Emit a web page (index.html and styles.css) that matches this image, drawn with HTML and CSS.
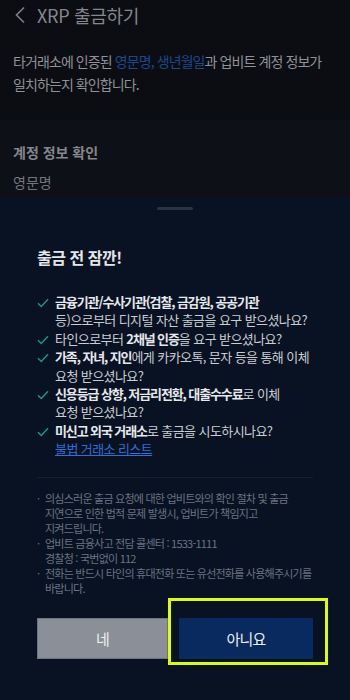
FILE: index.html
```html
<!DOCTYPE html>
<html lang="ko">
<head>
<meta charset="utf-8">
<link rel="stylesheet" href="styles.css">
</head>
<body>
<div class="page">
  <header class="topbar">
    <svg class="back" width="12" height="18" viewBox="0 0 12 18"><path d="M10 1.5 L2.5 9 L10 16.5" fill="none" stroke="#7d8087" stroke-width="1.6"/></svg>
    <h1 class="title">XRP 출금하기</h1>
  </header>
  <p class="desc">타거래소에 인증된 <span class="hl">영문명, 생년월일</span>과 업비트 계정 정보가<br>일치하는지 확인합니다.</p>
  <section class="account">
    <h2 class="acc-title">계정 정보 확인</h2>
    <p class="acc-label">영문명</p>
  </section>

  <div class="sheet">
    <div class="handle"></div>
    <h3 class="sheet-title">출금 전 잠깐!</h3>
    <ul class="checks">
      <li><svg class="chk" width="12" height="10" viewBox="0 0 12 10"><path d="M1 5.2 L4.3 8.5 L11 1.2" fill="none" stroke="#1f9a78" stroke-width="1.4"/></svg><span><b>금융기관/수사기관(검찰, 금감원, 공공기관</b><br>등)으로부터 디지털 자산 출금을 요구 받으셨나요?</span></li>
      <li><svg class="chk" width="12" height="10" viewBox="0 0 12 10"><path d="M1 5.2 L4.3 8.5 L11 1.2" fill="none" stroke="#1f9a78" stroke-width="1.4"/></svg><span>타인으로부터 <b>2채널 인증</b>을 요구 받으셨나요?</span></li>
      <li><svg class="chk" width="12" height="10" viewBox="0 0 12 10"><path d="M1 5.2 L4.3 8.5 L11 1.2" fill="none" stroke="#1f9a78" stroke-width="1.4"/></svg><span><b>가족, 자녀, 지인</b>에게 카카오톡, 문자 등을 통해 이체<br>요청 받으셨나요?</span></li>
      <li><svg class="chk" width="12" height="10" viewBox="0 0 12 10"><path d="M1 5.2 L4.3 8.5 L11 1.2" fill="none" stroke="#1f9a78" stroke-width="1.4"/></svg><span><b>신용등급 상향, 저금리전환, 대출수수료</b>로 이체<br>요청 받으셨나요?</span></li>
      <li><svg class="chk" width="12" height="10" viewBox="0 0 12 10"><path d="M1 5.2 L4.3 8.5 L11 1.2" fill="none" stroke="#1f9a78" stroke-width="1.4"/></svg><span><b>미신고 외국 거래소</b>로 출금을 시도하시나요?<br><a class="link" href="#">불법 거래소 리스트</a></span></li>
    </ul>
    <hr class="divider">
    <ul class="notes">
      <li>의심스러운 출금 요청에 대한 업비트와의 확인 절차 및 출금<br>지연으로 인한 법적 문제 발생시, 업비트가 책임지고<br>지켜드립니다.</li>
      <li>업비트 금융사고 전담 콜센터 : 1533-1111<br>경찰청 : 국번없이 112</li>
      <li>전화는 반드시 타인의 휴대전화 또는 유선전화를 사용해주시기를<br>바랍니다.</li>
    </ul>
    <div class="actions">
      <button class="btn btn-yes">네</button>
      <div class="focus-wrap">
        <button class="btn btn-no">아니요</button>
      </div>
    </div>
  </div>
</div>
</body>
</html>
```

FILE: styles.css
```css
* { box-sizing: border-box; }
html, body { margin: 0; padding: 0; }
body {
  background: #0b0d13;
  font-family: "Noto Sans CJK KR", "Noto Sans", "Liberation Sans", sans-serif;
  width: 350px;
  height: 700px;
  overflow: hidden;
}
.page {
  position: relative;
  width: 350px;
  height: 700px;
}
.topbar {
  display: flex;
  align-items: center;
  height: 30px;
  padding-left: 14px;
  gap: 11px;
}
.back { display: block; }
.title {
  margin: 0;
  font-size: 18px;
  font-weight: 400;
  color: #84878d;
  letter-spacing: -0.3px;
}
.desc {
  margin: 20px 0 0;
  padding: 0 13px;
  font-size: 14px;
  line-height: 23px;
  color: #8e9196;
  letter-spacing: -0.065em;
  white-space: nowrap;
}
.hl { color: #1b4a8c; }
.account {
  margin-top: 24px;
  background: #0d1017;
  padding: 22px 13px 0;
  height: 110px;
}
.acc-title {
  margin: 0;
  font-size: 14px;
  font-weight: 700;
  color: #84878d;
  line-height: 20px;
}
.acc-label {
  margin: 10px 0 0;
  font-size: 14px;
  color: #74777d;
  line-height: 20px;
}
.sheet {
  position: absolute;
  left: 0;
  right: 0;
  top: 198px;
  bottom: 0;
  background: #081222;
  padding: 0 37px;
}
.handle {
  width: 36px;
  height: 3px;
  border-radius: 2px;
  background: #2a3342;
  margin: 9px auto 0;
}
.sheet-title {
  margin: 36px 0 0;
  font-size: 16px;
  font-weight: 700;
  color: #e4e6e9;
  line-height: 22px;
  letter-spacing: -0.03em;
}
.checks {
  list-style: none;
  margin: 25px 0 0;
  padding: 0;
  font-size: 13px;
  line-height: 18.4px;
  color: #c9ccd1;
  letter-spacing: -0.045em;
  white-space: nowrap;
}
.checks li {
  display: flex;
  gap: 6px;
}
.checks b { color: #e6e8eb; font-weight: 700; letter-spacing: -0.085em; }
.chk { flex: none; margin-top: 5px; }
.link { color: #2f6fd6; text-decoration: underline; }
.divider {
  border: 0;
  border-top: 1px solid #17202e;
  margin: 18px 0 0;
}
.notes {
  list-style: none;
  margin: 13px 0 0;
  padding: 0;
  font-size: 11px;
  line-height: 15px;
  color: #6c7382;
  letter-spacing: -0.07em;
  white-space: nowrap;
}
.notes li {
  position: relative;
  padding-left: 8px;
}
.notes li::before {
  content: "·";
  position: absolute;
  left: 0;
  top: 0;
}
.actions {
  display: grid;
  grid-template-columns: 131px 1fr;
  gap: 11px;
  margin-top: 22px;
}
.btn {
  border: 0;
  height: 41px;
  font-family: inherit;
  font-size: 15px;
  color: #eef0f3;
  width: 100%;
  letter-spacing: -0.05em;
}
.btn-yes { background: #8a8f98; border: 1px solid #6f7580; }
.btn-no { background: #082a5e; }
.focus-wrap {
  position: relative;
  display: flex;
}
.focus-wrap::after {
  content: "";
  position: absolute;
  left: -11px;
  right: -15px;
  top: -20px;
  bottom: -6px;
  border: 3.5px solid #dcff00;
}
```
